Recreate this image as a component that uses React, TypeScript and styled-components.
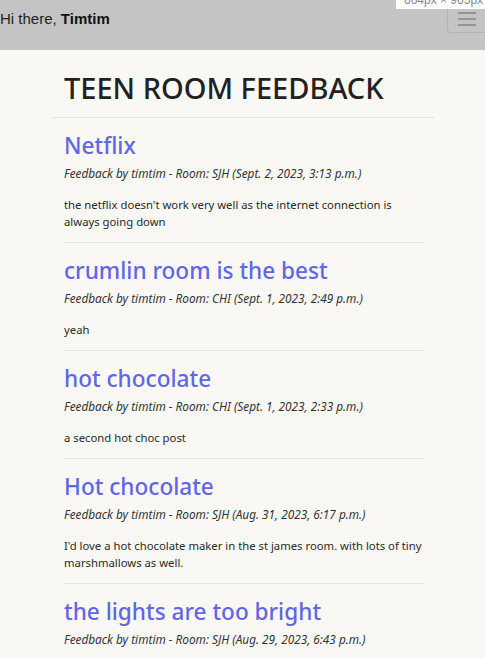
import React from "react";
import styled, { createGlobalStyle } from "styled-components";

const Global = createGlobalStyle`
  html, body { margin: 0; padding: 0; background: #f9f8f4; }
  body { font-family: "Noto Sans", "Open Sans", sans-serif; color: #212529; }
  * { box-sizing: border-box; }
`;

const Page = styled.div`
  position: relative;
  width: 485px;
  min-height: 658px;
  overflow: hidden;
  background: #f9f8f4;
`;

const NavBar = styled.nav`
  height: 50px;
  background: #c4c4c4;
  display: flex;
  align-items: flex-start;
  justify-content: space-between;
  padding: 8px 0 0 0;
`;

const Greeting = styled.div`
  font-family: "Liberation Sans", Arial, sans-serif;
  font-size: 15px;
  color: #222;
  line-height: 21px;
  b { font-weight: 700; color: #111; }
`;

const Toggler = styled.button`
  width: 40px;
  height: 25px;
  margin-right: -2px;
  border: 1px solid #b3b3b3;
  border-top: none;
  border-radius: 0 0 0 4px;
  background: transparent;
  display: flex;
  align-items: flex-start;
  justify-content: center;
  padding: 3px 0 0 0;
`;

const SizeTip = styled.div`
  position: absolute;
  top: -6px;
  right: 0;
  width: 89px;
  height: 15px;
  background: #fff;
  font-family: "Liberation Sans", Arial, sans-serif;
  font-size: 12px;
  color: #888;
  padding-left: 8px;
  line-height: 12px;
  white-space: nowrap;
  overflow: hidden;
`;

const Container = styled.main`
  width: 383px;
  margin-left: 52px;
`;

const Heading = styled.h1`
  font-size: 29px;
  font-weight: 500;
  margin: 0;
  padding: 18px 12px 9px;
  line-height: 40px;
  color: #212121;
  border-bottom: 1px solid #e6e5e1;
`;

const List = styled.div`
  padding: 0 11px 0 12px;
`;

const Item = styled.article`
  padding: 11px 0 12px;
  border-bottom: 1px solid #e6e5e1;
`;

const Title = styled.h2`
  margin: 0;
  font-size: 22.6px;
  font-weight: 500;
  color: #6266e3;
  line-height: 34px;
`;

const Meta = styled.p`
  margin: 0;
  font-size: 11.8px;
  font-style: italic;
  color: #333;
  line-height: 20px;
`;

const Body = styled.p`
  margin: 13px 0 0;
  font-size: 11.3px;
  color: #2a2a2a;
  line-height: 17px;
`;

const items = [
  { t: "Netflix", room: "SJH", d: "Sept. 2, 2023, 3:13 p.m.", b: "the netflix doesn't work very well as the internet connection is always going down" },
  { t: "crumlin room is the best", room: "CHI", d: "Sept. 1, 2023, 2:49 p.m.", b: "yeah" },
  { t: "hot chocolate", room: "CHI", d: "Sept. 1, 2023, 2:33 p.m.", b: "a second hot choc post" },
  { t: "Hot chocolate", room: "SJH", d: "Aug. 31, 2023, 6:17 p.m.", b: "I'd love a hot chocolate maker in the st james room. with lots of tiny marshmallows as well." },
  { t: "the lights are too bright", room: "SJH", d: "Aug. 29, 2023, 6:43 p.m.", b: "" },
];

export default function App() {
  return (
    <Page>
      <Global />
      <NavBar>
        <Greeting>Hi there, <b>Timtim</b></Greeting>
        <Toggler aria-label="menu">
          <svg width="18" height="16" viewBox="0 0 18 16">
            <g stroke="#8a8a8a" strokeWidth="1.6">
              <line x1="0" y1="2" x2="18" y2="2" />
              <line x1="0" y1="8" x2="18" y2="8" />
              <line x1="0" y1="14" x2="18" y2="14" />
            </g>
          </svg>
        </Toggler>
      </NavBar>
      <SizeTip>664px × 965px</SizeTip>
      <Container>
        <Heading>TEEN ROOM FEEDBACK</Heading>
        <List>
          {items.map((it) => (
            <Item key={it.d}>
              <Title>{it.t}</Title>
              <Meta>Feedback by timtim - Room: {it.room} ({it.d})</Meta>
              {it.b && <Body>{it.b}</Body>}
            </Item>
          ))}
        </List>
      </Container>
    </Page>
  );
}
